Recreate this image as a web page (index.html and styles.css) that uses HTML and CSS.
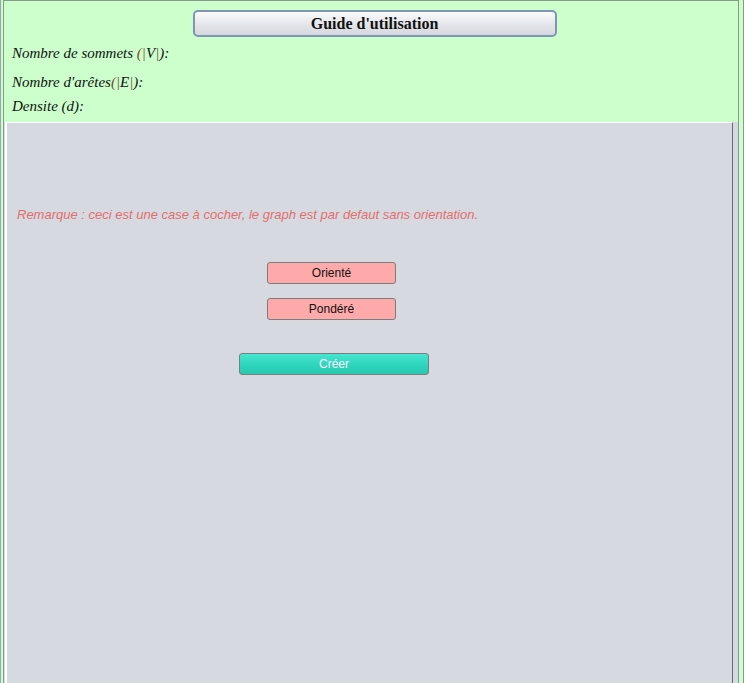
FILE: index.html
```html
<!DOCTYPE html>
<html lang="fr">
<head>
<meta charset="utf-8">
<title>Graphe</title>
<link rel="stylesheet" href="styles.css">
</head>
<body>
<div class="shell">
  <header class="top">
    <button class="guide" type="button">Guide d'utilisation</button>
  </header>
  <section class="stats">
    <p class="stat stat-v">Nombre de sommets <span class="m">(|</span>V<span class="m">|</span>):</p>
    <p class="stat stat-e">Nombre d'arêtes<span class="m">(|</span>E<span class="m">|</span>):</p>
    <p class="stat stat-d">Densite (d):</p>
  </section>
  <main class="panel">
    <div class="panel-inner">
      <p class="remark">Remarque : ceci est une case à cocher, le graph est par defaut sans orientation.</p>
      <div class="options">
        <button class="toggle" type="button">Orienté</button>
        <button class="toggle" type="button">Pondéré</button>
      </div>
      <button class="create" type="button">Créer</button>
    </div>
  </main>
</div>
</body>
</html>
```

FILE: styles.css
```css
html {
  background: #ccffcc;
}

body {
  margin: 0;
  height: 683px;
  box-sizing: border-box;
  overflow: hidden;
  background: #ccffcc;
  border-left: 1px solid #9aa4b2;
  border-right: 1px solid #8a9a8a;
  padding: 0 4px 0 2px;
}

.shell {
  height: 100%;
  box-sizing: border-box;
  border: 1px solid #8a9a8a;
  border-bottom: none;
  display: flex;
  flex-direction: column;
}

.top {
  display: flex;
  justify-content: center;
  padding-top: 9px;
  padding-left: 7px;
}

.guide {
  width: 364px;
  height: 27px;
  border: 2px solid #7f95b5;
  border-radius: 5px;
  background: linear-gradient(#fbfbfc, #e4e5ea 55%, #d6d8de);
  font-family: "Liberation Serif", serif;
  font-weight: bold;
  font-size: 16px;
  color: #111;
  padding: 0;
}

.stats {
  padding-left: 8px;
  font-family: "Liberation Serif", serif;
  font-style: italic;
  font-size: 15px;
  color: #111;
}

.stat {
  margin: 0;
  line-height: 18px;
}

.stat-v { margin-top: 7px; }
.stat-e { margin-top: 11px; }
.stat-d { margin-top: 6px; }

.m {
  color: #7a4a30;
}

.panel {
  flex: 1;
  margin-top: 7px;
  display: flex;
  background: #d6d9df;
  padding-right: 5px;
}

.panel-inner {
  flex: 1;
  border-top: 1px solid #ffffff;
  border-left: 2px solid #ffffff;
  margin-left: 1px;
  border-right: 1px solid #6b6b6b;
  background: #d6d9df;
  padding: 84px 10px 0 10px;
}

.remark {
  margin: 0;
  font-family: "Liberation Sans", Arial, sans-serif;
  font-style: italic;
  font-size: 13px;
  line-height: 15px;
  color: #e36e6e;
}

.options {
  display: flex;
  flex-direction: column;
  align-items: flex-start;
  gap: 14px;
  margin-top: 40px;
  margin-left: 250px;
}

.toggle,
.create {
  height: 22px;
  border: 1px solid #7d7d7d;
  border-radius: 3px;
  font-family: "Liberation Sans", Arial, sans-serif;
  font-size: 12px;
  padding: 0;
}

.toggle {
  width: 129px;
  background: #ffaaaa;
  color: #111;
}

.create {
  display: block;
  width: 190px;
  margin-top: 33px;
  margin-left: 222px;
  background: linear-gradient(#46e6d0, #2dd3bb 60%, #28c8b0);
  color: #ffffff;
}
```
